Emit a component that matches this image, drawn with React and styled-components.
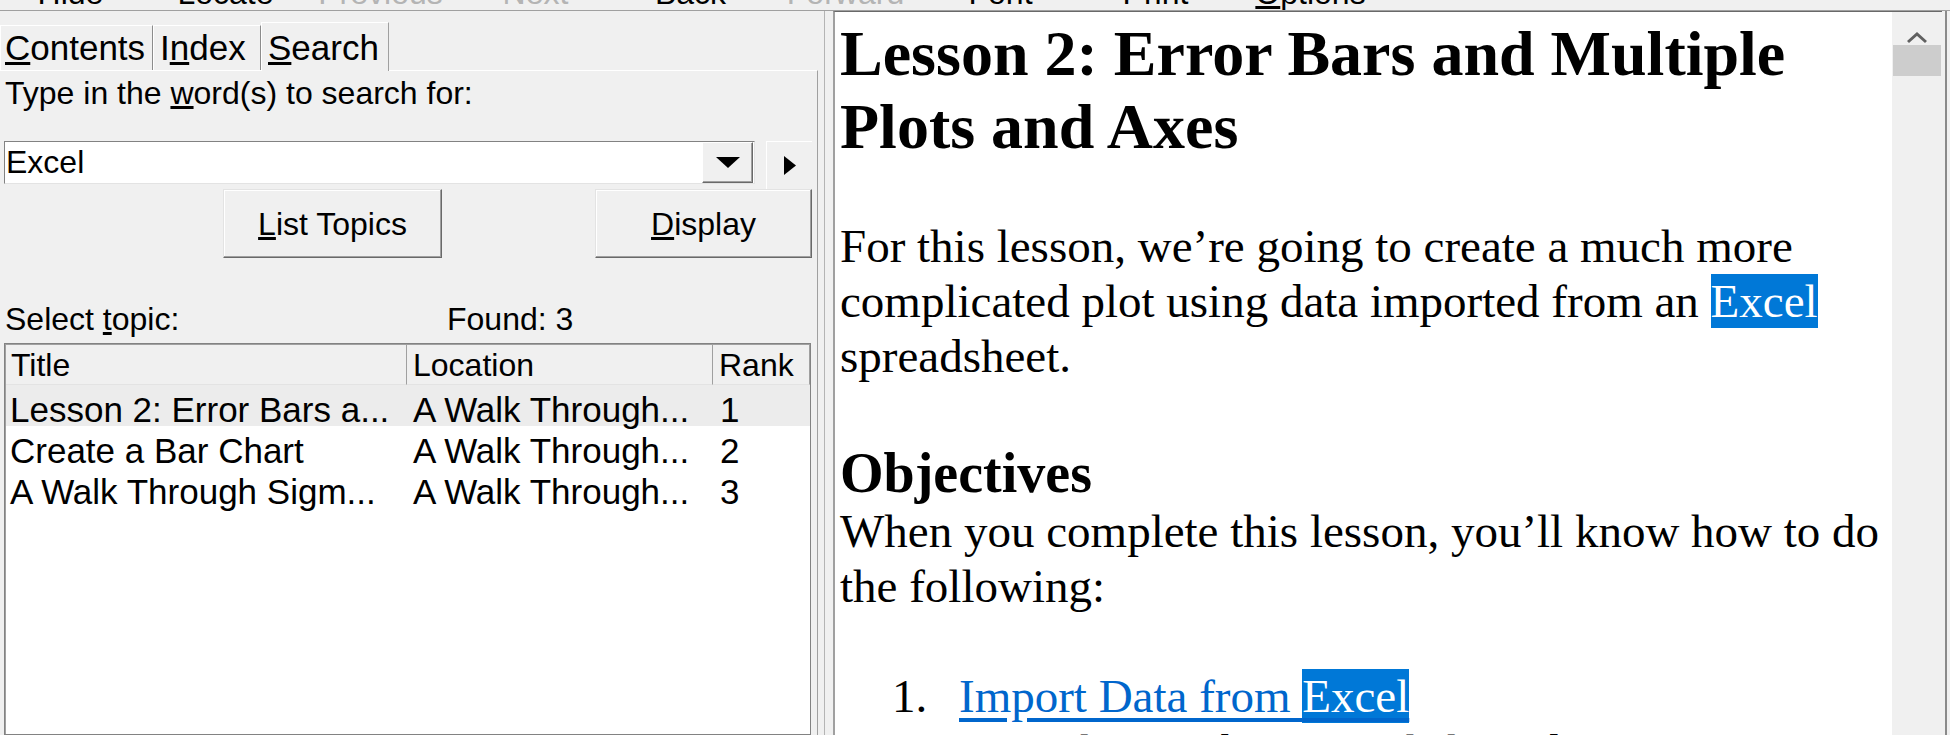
import React from 'react';
import styled, { createGlobalStyle } from 'styled-components';

const UI = `"Liberation Sans", Arial, sans-serif`;
const SERIF = `"Liberation Serif", "Times New Roman", serif`;

const GlobalStyle = createGlobalStyle`
  html, body {
    margin: 0;
    padding: 0;
    overflow: hidden;
    background: #f0f0f0;
  }
`;

const Window = styled.div`
  width: 1950px;
  height: 735px;
  overflow: hidden;
  display: flex;
  flex-direction: column;
  background: #f0f0f0;
  font-family: ${UI};
  color: #000;
`;

/* toolbar: only the bottom of the labels shows */
const MenuBar = styled.div`
  height: 10px;
  flex-shrink: 0;
  overflow: hidden;
  border-bottom: 1px solid #a0a0a0;
`;
const MenuRow = styled.div`
  display: flex;
  margin: -25px 0 0 -7px;
`;
const MenuItem = styled.div`
  width: 155px;
  flex-shrink: 0;
  text-align: center;
  font-size: 32px;
  line-height: 36px;
  white-space: nowrap;
  color: ${p => (p.$off ? '#b4b4b4' : '#000')};
`;

const Body = styled.div`
  flex: 1;
  min-height: 0;
  display: flex;
`;

/* left navigation pane */
const NavPane = styled.div`
  width: 818px;
  flex-shrink: 0;
  display: flex;
  flex-direction: column;
`;
const TabStrip = styled.div`
  height: 59px;
  flex-shrink: 0;
  display: flex;
  align-items: flex-end;
`;
const Tab = styled.div`
  position: relative;
  width: ${p => p.$w}px;
  height: ${p => (p.$active ? 49 : 45)}px;
  margin-bottom: ${p => (p.$active ? -1 : 0)}px;
  z-index: ${p => (p.$active ? 1 : 0)};
  box-sizing: border-box;
  display: flex;
  align-items: flex-end;
  padding: 0 0 ${p => (p.$active ? 3 : 2)}px ${p => p.$pl}px;
  background: #f0f0f0;
  border-top: 1px solid #fff;
  border-left: 1px solid #fff;
  border-right: 1px solid ${p => (p.$active ? '#a0a0a0' : '#8c8c8c')};
  font-size: 35px;
  line-height: 40px;
  white-space: nowrap;
`;
const TabPage = styled.div`
  flex: 1;
  min-height: 0;
  display: flex;
  flex-direction: column;
  border-top: 1px solid #fff;
  border-right: 1px solid #a0a0a0;
`;
const Label = styled.div`
  margin-top: ${p => p.$mt || 0}px;
  padding-left: 5px;
  font-size: 32px;
  line-height: 37px;
  white-space: nowrap;
`;
const ComboRow = styled.div`
  margin-top: 29px;
  padding-left: 4px;
  display: flex;
  align-items: flex-start;
  gap: 11px;
`;
const Combo = styled.div`
  width: 751px;
  height: 43px;
  box-sizing: border-box;
  display: flex;
  align-items: center;
  background: #fff;
  border: 1px solid;
  border-color: #828282 #e3e3e3 #e3e3e3 #828282;
`;
const ComboText = styled.div`
  flex: 1;
  padding-left: 1px;
  font-size: 32px;
  line-height: 37px;
`;
const DropButton = styled.div`
  width: 51px;
  height: 41px;
  box-sizing: border-box;
  display: flex;
  align-items: center;
  justify-content: center;
  background: #f0f0f0;
  border: 1px solid;
  border-color: #fff #696969 #696969 #fff;
  box-shadow: inset -1px -1px #a0a0a0;
  margin-right: 1px;
`;
const GoButton = styled.div`
  width: 46px;
  height: 48px;
  box-sizing: border-box;
  display: flex;
  align-items: center;
  justify-content: center;
  background: #f0f0f0;
  border-top: 1px solid #fff;
  border-left: 1px solid #fff;
`;
const ButtonRow = styled.div`
  display: flex;
  gap: 153px;
  padding-left: 223px;
`;
const PushButton = styled.div`
  width: ${p => p.$w}px;
  height: 69px;
  box-sizing: border-box;
  display: flex;
  align-items: center;
  justify-content: center;
  padding-top: 1px;
  background: #f0f0f0;
  border: 1px solid;
  border-color: #e3e3e3 #696969 #696969 #e3e3e3;
  box-shadow: inset -1px -1px #a0a0a0, inset 1px 1px #fff;
  font-size: 32px;
  line-height: 37px;
`;
const StatusRow = styled.div`
  margin-top: 43px;
  display: flex;
  font-size: 32px;
  line-height: 37px;
`;
const StatusCell = styled.div`
  width: ${p => (p.$w ? `${p.$w}px` : 'auto')};
  padding-left: ${p => p.$pl || 0}px;
  box-sizing: border-box;
`;
const ListView = styled.div`
  margin: 5px 0 0 4px;
  width: 807px;
  flex: 1;
  box-sizing: border-box;
  background: #fff;
  border: 1px solid #828282;
  box-shadow: inset 1px 1px #a0a0a0;
  padding: 1px 0 0 1px;
`;
const Grid = styled.div`
  display: grid;
  grid-template-columns: 401px 306px 1fr;
`;
const HeadCell = styled.div`
  height: 40px;
  box-sizing: border-box;
  padding-left: ${p => p.$pl}px;
  background: #f0f0f0;
  border-right: 1px solid #a0a0a0;
  border-bottom: 1px solid #e3e3e3;
  font-size: 32px;
  line-height: 40px;
  white-space: nowrap;
`;
const Cell = styled.div`
  height: 41px;
  box-sizing: border-box;
  padding: 6px 0 0 ${p => p.$pl}px;
  background: ${p => (p.$sel ? '#ececec' : 'transparent')};
  font-size: 35px;
  line-height: 37px;
  white-space: nowrap;
`;

const Splitter = styled.div`
  width: 15px;
  flex-shrink: 0;
  display: flex;
  justify-content: center;
  &::after {
    content: '';
    width: 1px;
    margin-left: -3px;
    background: #b4b4b4;
  }
`;

/* right topic pane */
const ContentPane = styled.div`
  width: 1109px;
  flex-shrink: 0;
  display: flex;
  box-sizing: border-box;
  background: #fff;
  border-left: 2px solid #a0a0a0;
  border-top: 1px solid #696969;
`;
const Article = styled.div`
  flex: 1;
  min-width: 0;
  overflow: hidden;
  padding: 5px 0 0 5px;
  font-family: ${SERIF};
  color: #000;
`;
const Title = styled.h1`
  margin: 0;
  font-size: 64px;
  line-height: 73px;
  font-weight: bold;
`;
const Para = styled.p`
  margin: ${p => p.$mt || 0}px 0 0;
  font-size: 47px;
  line-height: 55px;
`;
const Heading = styled.h2`
  margin: 58px 0 0;
  font-size: 56px;
  line-height: 62px;
  font-weight: bold;
`;
const Hit = styled.span`
  background: #0078d7;
  color: #fff;
  padding: 1px 0;
`;
const Steps = styled.ol`
  list-style: none;
  margin: 55px 0 0;
  padding: 0;
  font-size: 47px;
  line-height: 55px;
`;
const Step = styled.li`
  display: grid;
  grid-template-columns: 119px 1fr;
`;
const StepNum = styled.span`
  padding-left: 52px;
`;
const StepLink = styled.a`
  color: #0066cc;
  text-decoration: underline;
  text-underline-offset: 6px;
`;
const StepText = styled.div`
  grid-column: 2;
`;

const ScrollBar = styled.div`
  width: 50px;
  flex-shrink: 0;
  display: flex;
  flex-direction: column;
  background: #f0f0f0;
`;
const ScrollArrow = styled.div`
  height: 33px;
  display: flex;
  justify-content: center;
  align-items: flex-end;
`;
const Thumb = styled.div`
  height: 31px;
  margin: 0 1px;
  background: #cdcdcd;
`;
const Edge = styled.div`
  width: 8px;
  flex-shrink: 0;
  display: flex;
  &::before {
    content: '';
    width: 3px;
  }
  &::after {
    content: '';
    width: 2px;
    background: #8a8a8a;
  }
`;

const DownTri = () => (
  <svg width="24" height="11" viewBox="0 0 24 11">
    <polygon points="0,0 24,0 12,11" fill="#000" />
  </svg>
);
const RightTri = () => (
  <svg width="12" height="19" viewBox="0 0 12 19">
    <polygon points="0,0 12,9.5 0,19" fill="#000" />
  </svg>
);
const Chevron = () => (
  <svg width="22" height="14" viewBox="0 0 22 14">
    <polyline points="2,11 11,3 20,11" fill="none" stroke="#606060" strokeWidth="3" />
  </svg>
);

const menu = [
  { t: 'Hide' },
  { t: 'Locate' },
  { t: 'Previous', off: true },
  { t: 'Next', off: true },
  { t: 'Back' },
  { t: 'Forward', off: true },
  { t: 'Font' },
  { t: 'Print' },
  { t: <><u>O</u>ptions</> },
];

const topics = [
  ['Lesson 2: Error Bars a...', 'A Walk Through...', '1'],
  ['Create a Bar Chart', 'A Walk Through...', '2'],
  ['A Walk Through Sigm...', 'A Walk Through...', '3'],
];

export default function App() {
  return (
    <>
      <GlobalStyle />
      <Window>
        <MenuBar>
          <MenuRow>
            {menu.map((m, i) => (
              <MenuItem key={i} $off={m.off}>{m.t}</MenuItem>
            ))}
          </MenuRow>
        </MenuBar>
        <Body>
          <NavPane>
            <TabStrip>
              <Tab $w={153} $pl={4}><u>C</u>ontents</Tab>
              <Tab $w={108} $pl={6}>I<u>n</u>dex</Tab>
              <Tab $w={128} $pl={6} $active>
                <u>S</u>earch
              </Tab>
            </TabStrip>
            <TabPage>
              <Label $mt={4}>
                Type in the <u>w</u>ord(s) to search for:
              </Label>
              <ComboRow>
                <Combo>
                  <ComboText>Excel</ComboText>
                  <DropButton><DownTri /></DropButton>
                </Combo>
                <GoButton><RightTri /></GoButton>
              </ComboRow>
              <ButtonRow>
                <PushButton $w={219}><u>L</u>ist Topics</PushButton>
                <PushButton $w={217}><u>D</u>isplay</PushButton>
              </ButtonRow>
              <StatusRow>
                <StatusCell $w={447} $pl={5}>
                  Select <u>t</u>opic:
                </StatusCell>
                <StatusCell>Found: 3</StatusCell>
              </StatusRow>
              <ListView>
                <Grid>
                  <HeadCell $pl={5}>Title</HeadCell>
                  <HeadCell $pl={6}>Location</HeadCell>
                  <HeadCell $pl={6}>Rank</HeadCell>
                  {topics.map((r, i) => (
                    <React.Fragment key={i}>
                      <Cell $pl={4} $sel={i === 0}>{r[0]}</Cell>
                      <Cell $pl={6} $sel={i === 0}>{r[1]}</Cell>
                      <Cell $pl={7} $sel={i === 0}>{r[2]}</Cell>
                    </React.Fragment>
                  ))}
                </Grid>
              </ListView>
            </TabPage>
          </NavPane>
          <Splitter />
          <ContentPane>
            <Article>
              <Title>Lesson 2: Error Bars and Multiple Plots and Axes</Title>
              <Para $mt={56}>
                For this lesson, we’re going to create a much more complicated plot using
                data imported from an <Hit>Excel</Hit> spreadsheet.
              </Para>
              <Heading>Objectives</Heading>
              <Para>When you complete this lesson, you’ll know how to do the following:</Para>
              <Steps>
                <Step>
                  <StepNum>1.</StepNum>
                  <StepLink>
                    Import Data from <Hit>Excel</Hit>
                  </StepLink>
                  <StepText>Learn how to bring worksheet data into a SigmaPlot notebook.</StepText>
                </Step>
              </Steps>
            </Article>
            <ScrollBar>
              <ScrollArrow><Chevron /></ScrollArrow>
              <Thumb />
            </ScrollBar>
          </ContentPane>
          <Edge />
        </Body>
      </Window>
    </>
  );
}
